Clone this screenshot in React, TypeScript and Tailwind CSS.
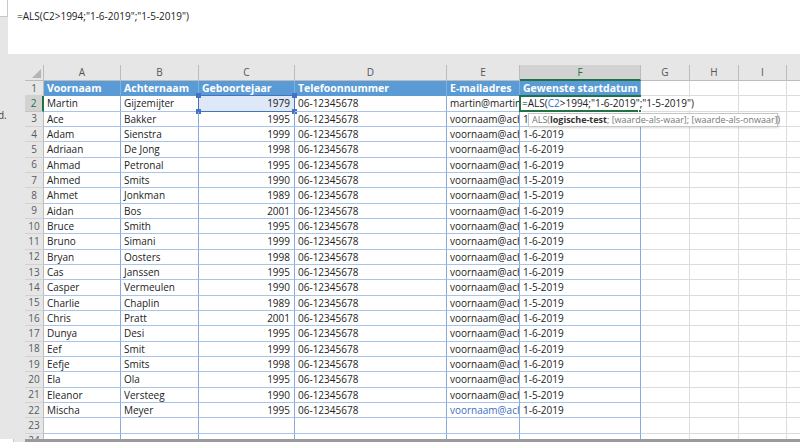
const columns = [
  { key: "A", w: "w-[77px]" },
  { key: "B", w: "w-[78px]" },
  { key: "C", w: "w-[96px]" },
  { key: "D", w: "w-[152px]" },
  { key: "E", w: "w-[73px]" },
  { key: "F", w: "w-[121px]" },
];

const extra = [
  { key: "G", w: "w-[49px]" },
  { key: "H", w: "w-[49px]" },
  { key: "I", w: "w-[48px]" },
];

const headers = ["Voornaam", "Achternaam", "Geboortejaar", "Telefoonnummer", "E-mailadres", "Gewenste startdatum"];

const people: [string, string, string, string][] = [
  ["Martin", "Gijzemijter", "1979", ""],
  ["Ace", "Bakker", "1995", "1-6-2019"],
  ["Adam", "Sienstra", "1999", "1-6-2019"],
  ["Adriaan", "De Jong", "1998", "1-6-2019"],
  ["Ahmad", "Petronal", "1995", "1-6-2019"],
  ["Ahmed", "Smits", "1990", "1-5-2019"],
  ["Ahmet", "Jonkman", "1989", "1-5-2019"],
  ["Aidan", "Bos", "2001", "1-6-2019"],
  ["Bruce", "Smith", "1995", "1-6-2019"],
  ["Bruno", "Simani", "1999", "1-6-2019"],
  ["Bryan", "Oosters", "1998", "1-6-2019"],
  ["Cas", "Janssen", "1995", "1-6-2019"],
  ["Casper", "Vermeulen", "1990", "1-5-2019"],
  ["Charlie", "Chaplin", "1989", "1-5-2019"],
  ["Chris", "Pratt", "2001", "1-6-2019"],
  ["Dunya", "Desi", "1995", "1-6-2019"],
  ["Eef", "Smit", "1999", "1-6-2019"],
  ["Eefje", "Smits", "1998", "1-6-2019"],
  ["Ela", "Ola", "1995", "1-6-2019"],
  ["Eleanor", "Versteeg", "1990", "1-5-2019"],
  ["Mischa", "Meyer", "1995", "1-6-2019"],
];

const tableCell = "relative shrink-0 h-full border-r border-b border-r-[#86abdc] border-b-[#a9c4ea] px-[3px] whitespace-nowrap overflow-hidden";
const plainCell = "shrink-0 h-full border-r border-b border-[#dcdcdc]";

function RowHead({ n, active }: { n: number; active?: boolean }) {
  return (
    <div
      className={`shrink-0 w-[19px] h-full flex items-center justify-center text-[10px] border-b ${
        active
          ? "bg-[#d2d2d2] text-[#217346] border-r-2 border-r-[#217346] border-b-[#c4c4c4]"
          : "bg-[#e6e6e6] text-[#5a5a5a] border-r border-r-[#bcbcbc] border-b-[#d2d2d2]"
      }`}
    >
      {n}
    </div>
  );
}

function Extras() {
  return (
    <>
      {extra.map((c) => (
        <div key={c.key} className={`${plainCell} ${c.w}`} />
      ))}
      <div className="flex-1 h-full border-b border-[#dcdcdc]" />
    </>
  );
}

export default function App() {
  return (
    <div className="w-[800px] h-[442px] overflow-hidden bg-[#e6e6e6] flex flex-col font-['Open_Sans',sans-serif] text-[#222]">
      {/* formula bar */}
      <div className="flex h-[54px] shrink-0">
        <div className="w-[8px] flex flex-col">
          <div className="h-[17px] bg-white border-r border-b border-[#c8c8c8]" />
        </div>
        <div className="flex-1 bg-white pl-[9px] pt-[8px] text-[10px] leading-[17px]">
          =ALS(C2&gt;1994;"1-6-2019";"1-5-2019")
        </div>
      </div>
      <div className="h-[11px] shrink-0" />

      <div className="flex h-[374px] shrink-0 overflow-hidden">
        {/* left side strip */}
        <div className="w-[25px] shrink-0 pt-[44px] text-[10px] leading-[12px] text-[#444] overflow-hidden">
          <span className="block -ml-[2px]">d.</span>
        </div>

        <div className="flex-1 flex flex-col bg-white">
          {/* column letters */}
          <div className="flex h-[16px] shrink-0 bg-[#e6e6e6] text-[10px] text-[#555]">
            <div className="w-[19px] shrink-0 h-full border-r border-b border-[#bcbcbc] flex items-end justify-end p-[2px]">
              <div className="w-0 h-0 border-l-[9px] border-l-transparent border-b-[9px] border-b-[#b4b4b4]" />
            </div>
            {columns.map((c) => (
              <div
                key={c.key}
                className={`${c.w} shrink-0 h-full flex items-center justify-center border-r ${
                  c.key === "F"
                    ? "bg-[#d2d2d2] text-[#217346] border-b-2 border-b-[#217346] border-r-[#bcbcbc]"
                    : "border-b border-[#bcbcbc]"
                }`}
              >
                {c.key}
              </div>
            ))}
            {extra.map((c) => (
              <div key={c.key} className={`${c.w} shrink-0 h-full flex items-center justify-center border-r border-b border-[#bcbcbc]`}>
                {c.key}
              </div>
            ))}
            <div className="flex-1 border-b border-[#bcbcbc]" />
          </div>

          {/* row 1: table header */}
          <div className="flex h-[15.33px] shrink-0 text-[10.5px] leading-[15px]">
            <RowHead n={1} />
            {columns.map((c, i) => (
              <div key={c.key} className={`${c.w} shrink-0 h-full bg-[#5b9bd5] text-white font-bold px-[3px] whitespace-nowrap overflow-hidden border-r border-r-[#7eb0e0] border-b border-b-[#5b9bd5]`}>
                {headers[i]}
              </div>
            ))}
            <Extras />
          </div>

          {/* data rows */}
          {people.map(([first, last, year, start], idx) => {
            const n = idx + 2;
            const isMartin = n === 2;
            return (
              <div key={n} className="flex h-[15.33px] shrink-0 text-[10px] leading-[15px]">
                <RowHead n={n} active={isMartin} />
                <div className={`${tableCell} w-[77px]`}>{first}</div>
                <div className={`${tableCell} w-[78px]`}>{last}</div>
                <div className={`${tableCell} w-[96px] text-right overflow-visible`}>
                  {isMartin && (
                    <div className="absolute -top-[1px] -left-[1px] -right-[1px] -bottom-[1px] bg-[#dfe8f6] border border-[#4472c4]">
                      <div className="absolute -top-[3px] -left-[3px] w-[5px] h-[5px] bg-[#4472c4]" />
                      <div className="absolute -top-[3px] -right-[3px] w-[5px] h-[5px] bg-[#4472c4]" />
                      <div className="absolute -bottom-[3px] -left-[3px] w-[5px] h-[5px] bg-[#4472c4]" />
                      <div className="absolute -bottom-[3px] -right-[3px] w-[5px] h-[5px] bg-[#4472c4]" />
                    </div>
                  )}
                  <span className="relative pr-[1px]">{year}</span>
                </div>
                <div className={`${tableCell} w-[152px]`}>06-12345678</div>
                <div className={`${tableCell} w-[73px] ${n === 22 ? "text-[#3a6fc4]" : ""}`}>
                  {isMartin ? "martin@martingijzemijter.nl" : "voornaam@achternaam.nl"}
                </div>
                <div className={`${tableCell} w-[121px] overflow-visible ${isMartin ? "z-10" : ""}`}>
                  {isMartin ? (
                    <div className="absolute -top-[1px] -left-[1px] h-[17px] w-[122px] border-2 border-[#217346]">
                      <div className="absolute top-0 left-0 h-[13px] bg-white pl-[1px] whitespace-nowrap leading-[13px]">
                        =ALS(<span className="text-[#3a6fc4]">C2</span>&gt;1994;"1-6-2019";"1-5-2019")
                      </div>
                      <div className="absolute -bottom-[3px] -right-[3px] w-[4px] h-[4px] bg-[#217346] border border-white" />
                    </div>
                  ) : (
                    start
                  )}
                  {n === 3 && (
                    <div className="absolute top-[1px] left-[8px] h-[14px] w-[250px] bg-white border border-[#c6c6c6] shadow-[1px_1px_2px_rgba(0,0,0,0.15)] pl-[3px] text-[9px] leading-[12px] text-[#777] whitespace-nowrap z-20">
                      ALS(<span className="font-bold text-[#333]">logische-test</span>; [waarde-als-waar]; [waarde-als-onwaar])
                    </div>
                  )}
                </div>
                <Extras />
              </div>
            );
          })}

          {/* empty rows */}
          {[23, 24].map((n) => (
            <div key={n} className="flex h-[15.33px] shrink-0 text-[10px] leading-[15px]">
              <RowHead n={n} />
              {columns.map((c) => (
                <div key={c.key} className={`${tableCell} ${c.w}`} />
              ))}
              <Extras />
            </div>
          ))}
        </div>
      </div>

      {/* bottom bar */}
      <div className="flex h-[3px] shrink-0">
        <div className="w-[14px] bg-white border-r border-[#c8c8c8]" />
        <div className="w-[11px]" />
        <div className="flex-1 bg-[#9a9a9a]" />
      </div>
    </div>
  );
}
